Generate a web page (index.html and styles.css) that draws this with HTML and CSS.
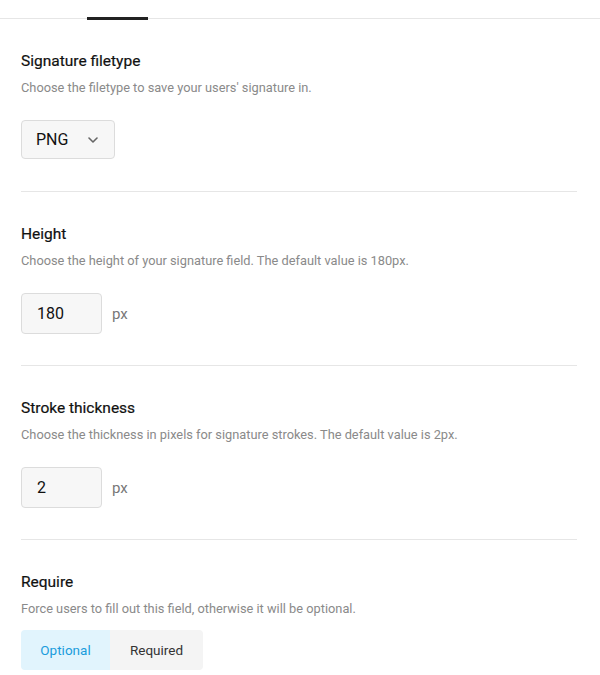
FILE: index.html
```html
<!DOCTYPE html>
<html lang="en">
<head>
    <meta charset="UTF-8">
    <meta name="viewport" content="width=device-width, initial-scale=1.0">
    <title>Signature field settings</title>
    <link rel="stylesheet" href="styles.css">
</head>
<body>
    <div class="tabs">
        <div class="tab active"></div>
    </div>
    <div class="settings">
        <div class="section first">
            <h3>Signature filetype</h3>
            <p>Choose the filetype to save your users' signature in.</p>
            <div class="select">
                <span>PNG</span>
                <svg width="10" height="6" viewBox="0 0 10 6"><path d="M1 1l4 4 4-4" fill="none" stroke="#666" stroke-width="1.6" stroke-linecap="round" stroke-linejoin="round"/></svg>
            </div>
        </div>
        <div class="section">
            <h3>Height</h3>
            <p>Choose the height of your signature field. The default value is 180px.</p>
            <div class="field-row">
                <div class="num-input">180</div>
                <span class="unit">px</span>
            </div>
        </div>
        <div class="section">
            <h3>Stroke thickness</h3>
            <p>Choose the thickness in pixels for signature strokes. The default value is 2px.</p>
            <div class="field-row">
                <div class="num-input">2</div>
                <span class="unit">px</span>
            </div>
        </div>
        <div class="section last">
            <h3>Require</h3>
            <p>Force users to fill out this field, otherwise it will be optional.</p>
            <div class="toggle">
                <button type="button" class="opt selected">Optional</button>
                <button type="button" class="opt">Required</button>
            </div>
        </div>
    </div>
</body>
</html>
```

FILE: styles.css
```css
body { margin: 0; font-family: Roboto, "Liberation Sans", sans-serif; background: #fff; color: #1a1a1a; }
.tabs { height: 18px; border-bottom: 1px solid #e6e6e6; display: flex; padding-left: 87px; }
.tab { width: 61px; }
.tab.active { border-bottom: 3px solid #222; margin-bottom: -2px; box-sizing: border-box; height: 20px; }
.settings { padding: 0 23px 0 21px; }
.section { padding: 32px 0 31px; border-bottom: 1px solid #e6e6e6; }
.section.first { padding-bottom: 32px; }
.section.last { border-bottom: none; }
h3 { margin: 0; font-size: 15.5px; line-height: 20px; font-weight: 400; color: #111; -webkit-text-stroke: 0.2px #111; }
p { margin: 8px 0 23px; font-size: 12.8px; line-height: 18px; color: #8a8a8a; }
.last p { margin-bottom: 12px; }
.select { width: 94px; height: 39px; box-sizing: border-box; border: 1px solid #dcdcdc; border-radius: 4px; background: #f7f7f7; display: flex; align-items: center; justify-content: space-between; padding: 0 16px 0 14px; font-size: 16px; color: #111; }
.field-row { display: flex; align-items: center; gap: 10px; }
.num-input { width: 81px; height: 41px; box-sizing: border-box; border: 1px solid #dcdcdc; border-radius: 4px; background: #f7f7f7; display: flex; align-items: center; padding-left: 15px; font-size: 16px; color: #111; }
.unit { font-size: 15px; color: #777; }
.toggle { display: flex; }
.opt { width: 89px; height: 40px; border: none; background: #f4f4f4; font-family: inherit; font-size: 13.5px; font-weight: 400; color: #333; padding: 0; }
.opt:first-child { border-radius: 4px 0 0 4px; }
.opt:last-child { width: 93px; border-radius: 0 4px 4px 0; }
.opt.selected { background: #e1f4fd; color: #1a9cdc; }
```
